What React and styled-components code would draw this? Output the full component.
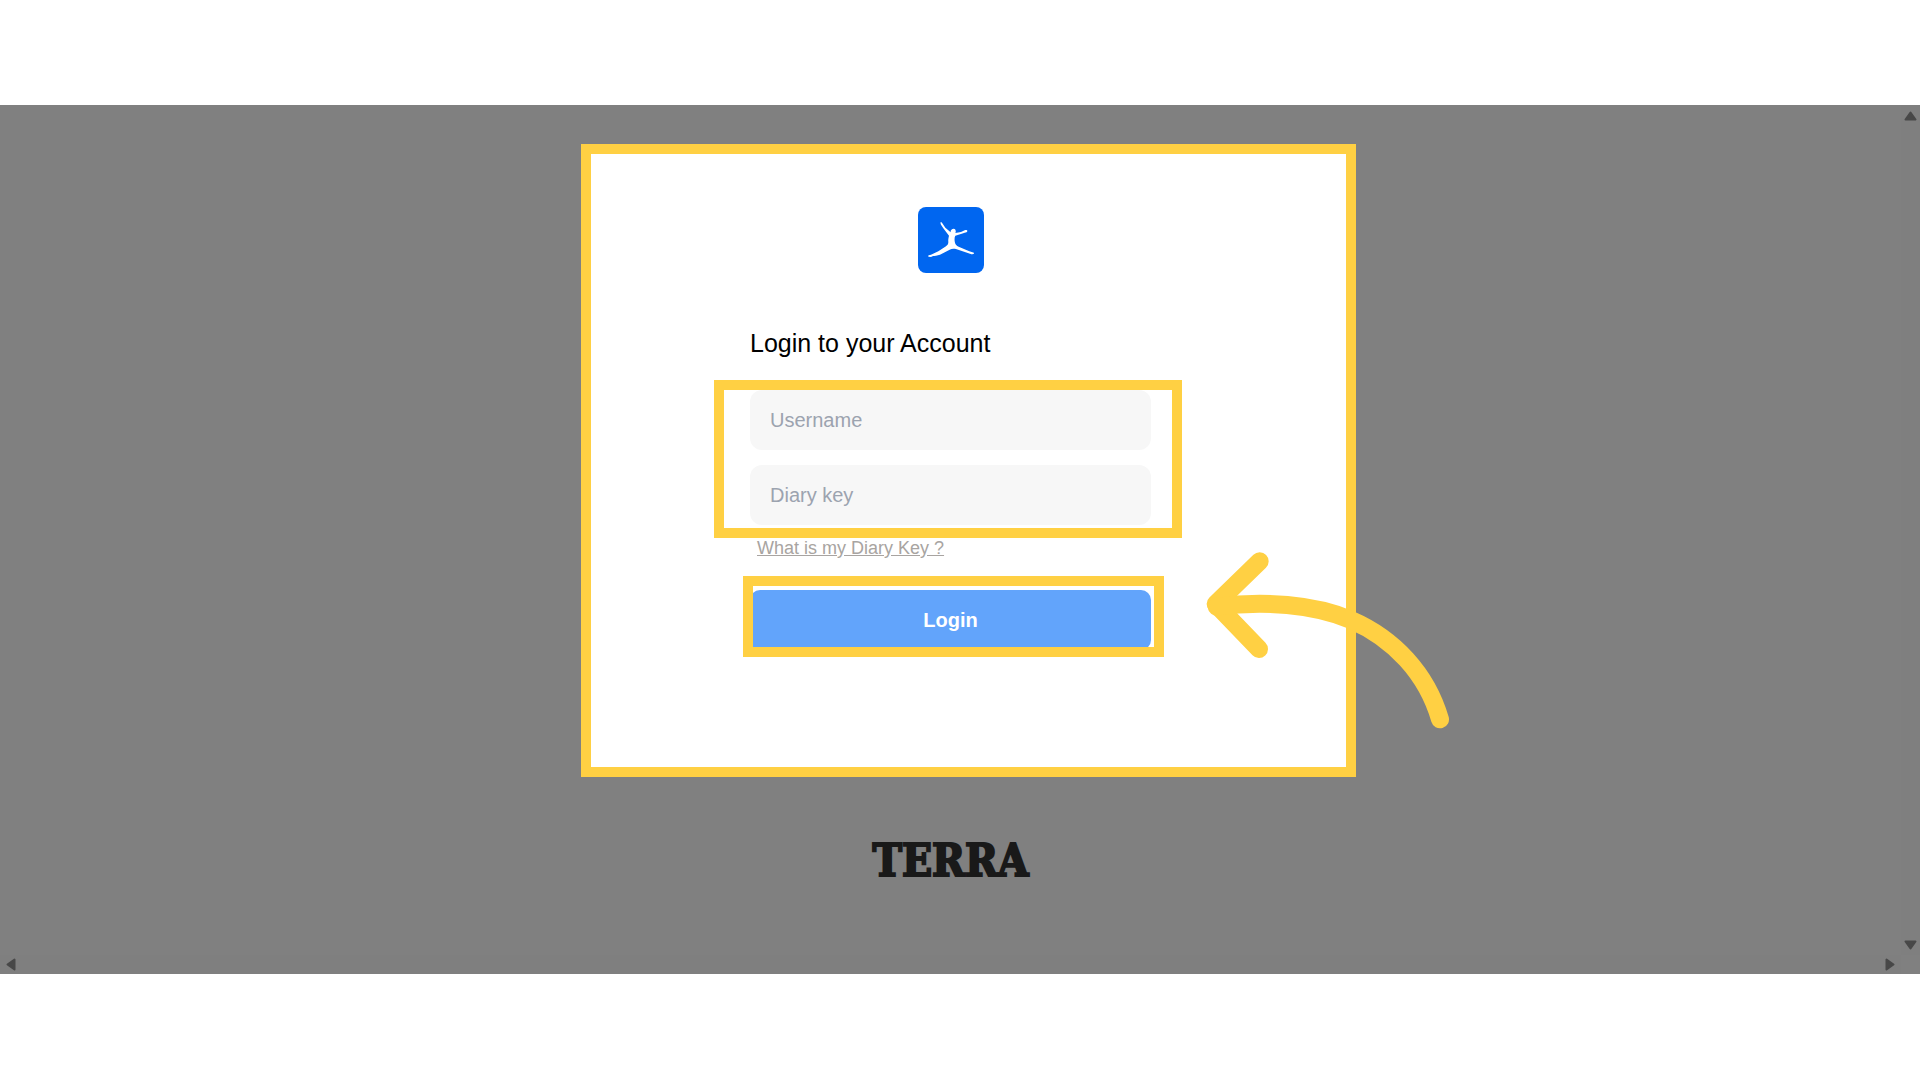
import React from "react";
import styled, { createGlobalStyle } from "styled-components";

const Color = {
  backdrop: "#808080",
  track: "#7f7f7f",
  thumb: "#484848",
  yellow: "#ffd043",
  blue: "#62a4fb",
  brand: "#0066f0",
  field: "#f7f7f7",
  placeholder: "#9ca3af",
  link: "#a8a4a1",
};

const GlobalStyle = createGlobalStyle`
  * {
    box-sizing: border-box;
  }

  body {
    margin: 0;
    background: #fff;
    font-family: "Liberation Sans", Arial, sans-serif;
  }
`;

const Page = styled.div`
  display: flex;
  min-height: 100vh;
  padding: 105px 0 106px;
`;

const Viewport = styled.div`
  flex: 1;
  display: grid;
  grid-template-columns: 1fr 19px;
  grid-template-rows: 1fr 19px;
  background: ${Color.backdrop};
`;

const Content = styled.main`
  display: flex;
  flex-direction: column;
  align-items: center;
  padding: 39px 0 60px;
`;

const Scrollbar = styled.div`
  display: flex;
  flex-direction: ${(p) => (p.$vertical ? "column" : "row")};
  justify-content: space-between;
  align-items: center;
  padding: ${(p) => (p.$vertical ? "6px 0 5px" : "0 6px")};
  background: ${Color.track};

  svg {
    display: block;
    fill: ${Color.thumb};
    stroke: ${Color.thumb};
    stroke-width: 2;
    stroke-linejoin: round;
  }
`;

const Card = styled.section`
  position: relative;
  width: 775px;
  height: 633px;
  margin-left: 36px;
  padding: 53px 195px 0 159px;
  border: 10px solid ${Color.yellow};
  background: #fff;
`;

const Form = styled.form`
  display: flex;
  flex-direction: column;
`;

const Logo = styled.svg`
  align-self: center;
  width: 66px;
  height: 66px;
`;

const Title = styled.h1`
  margin: 55px 0 32px;
  font-size: 25px;
  font-weight: 400;
  line-height: 30px;
  color: #000;
`;

// Frame drawn around its children, on top of them
const Highlight = styled.div`
  position: relative;
  display: flex;
  flex-direction: column;
  gap: 15px;

  &::after {
    content: "";
    position: absolute;
    inset: ${(p) => p.$inset};
    border: 10px solid ${Color.yellow};
    pointer-events: none;
  }
`;

const Input = styled.input`
  width: 100%;
  height: 60px;
  padding: 0 20px;
  border: 0;
  border-radius: 12px;
  background: ${Color.field};
  font: inherit;
  font-size: 20px;
  color: #000;

  &::placeholder {
    color: ${Color.placeholder};
    opacity: 1;
  }
`;

const HelpLink = styled.a`
  align-self: flex-start;
  margin: 13px 0 32px 7px;
  font-size: 18px;
  line-height: 20px;
  color: ${Color.link};
  text-decoration: underline;
`;

const LoginButton = styled.button`
  height: 60px;
  border: 0;
  border-radius: 10px;
  background: ${Color.blue};
  font: inherit;
  font-size: 20px;
  font-weight: 700;
  color: #fff;
  cursor: pointer;
`;

const Arrow = styled.svg`
  position: absolute;
  top: 376px;
  left: 589px;
  width: 300px;
  height: 220px;
  overflow: visible;
  pointer-events: none;
  fill: none;
  stroke: ${Color.yellow};
  stroke-width: 54;
  stroke-linecap: round;
  stroke-linejoin: round;
`;

const Wordmark = styled.div`
  margin-top: 61px;
  font-family: "DejaVu Serif Condensed", "DejaVu Serif", serif;
  font-size: 44px;
  font-weight: 700;
  line-height: 45px;
  color: #191919;
  -webkit-text-stroke: 2px #191919;
`;

function BrandLogo() {
  return (
    <Logo viewBox="0 0 198 198" aria-hidden="true">
      <rect width="198" height="198" rx="24" fill={Color.brand} />
      <path
        fill="#fff"
        d="M67 47 C69 44 72 46 73 49 L82 62 L98 76 C97 70 101 65 107 65
          C113 66 115 72 112 78 L129 75 L140 70 C144 68 148 69 148 72
          C148 75 144 77 140 77 L131 80 L112 86 C109 91 109 99 111 107
          C112 112 116 116 122 119 L154 133 C160 135 168 136 168 139
          C167 143 161 142 156 140 L116 127 C108 125 102 125 95 128
          L66 143 C58 146 49 146 45 147 C41 151 33 151 30 148
          C30 144 34 144 39 143 L61 133 L84 118 C89 114 91 111 91 105
          C90 97 92 91 93 86 L76 64 L69 53 Z"
      />
    </Logo>
  );
}

export default function App() {
  return (
    <>
      <GlobalStyle />
      <Page>
        <Viewport>
          <Content>
            <Card>
              <Form onSubmit={(e) => e.preventDefault()}>
                <BrandLogo />
                <Title>Login to your Account</Title>
                <Highlight $inset="-10px -31px -13px -36px">
                  <Input
                    type="text"
                    aria-label="Username"
                    placeholder="Username"
                  />
                  <Input
                    type="text"
                    aria-label="Diary key"
                    placeholder="Diary key"
                  />
                </Highlight>
                <HelpLink href="#diary-key">What is my Diary Key ?</HelpLink>
                <Highlight $inset="-14px -13px -7px -7px">
                  <LoginButton type="submit">Login</LoginButton>
                </Highlight>
              </Form>
              <Arrow viewBox="0 0 900 660" aria-hidden="true">
                <path d="M239 94 L107 222 L237 357" />
                <path d="M110 230 C250 212 400 222 513 270 C640 325 740 430 780 568" />
              </Arrow>
            </Card>
            <Wordmark>TERRA</Wordmark>
          </Content>
          <Scrollbar $vertical>
            <svg width="13" height="10" viewBox="0 0 13 10">
              <path d="M6.5 1.5 L11.5 8.5 H1.5 Z" />
            </svg>
            <svg width="13" height="10" viewBox="0 0 13 10">
              <path d="M6.5 8.5 L11.5 1.5 H1.5 Z" />
            </svg>
          </Scrollbar>
          <Scrollbar>
            <svg width="10" height="13" viewBox="0 0 10 13">
              <path d="M1.5 6.5 L8.5 1.5 V11.5 Z" />
            </svg>
            <svg width="10" height="13" viewBox="0 0 10 13">
              <path d="M8.5 6.5 L1.5 1.5 V11.5 Z" />
            </svg>
          </Scrollbar>
        </Viewport>
      </Page>
    </>
  );
}
